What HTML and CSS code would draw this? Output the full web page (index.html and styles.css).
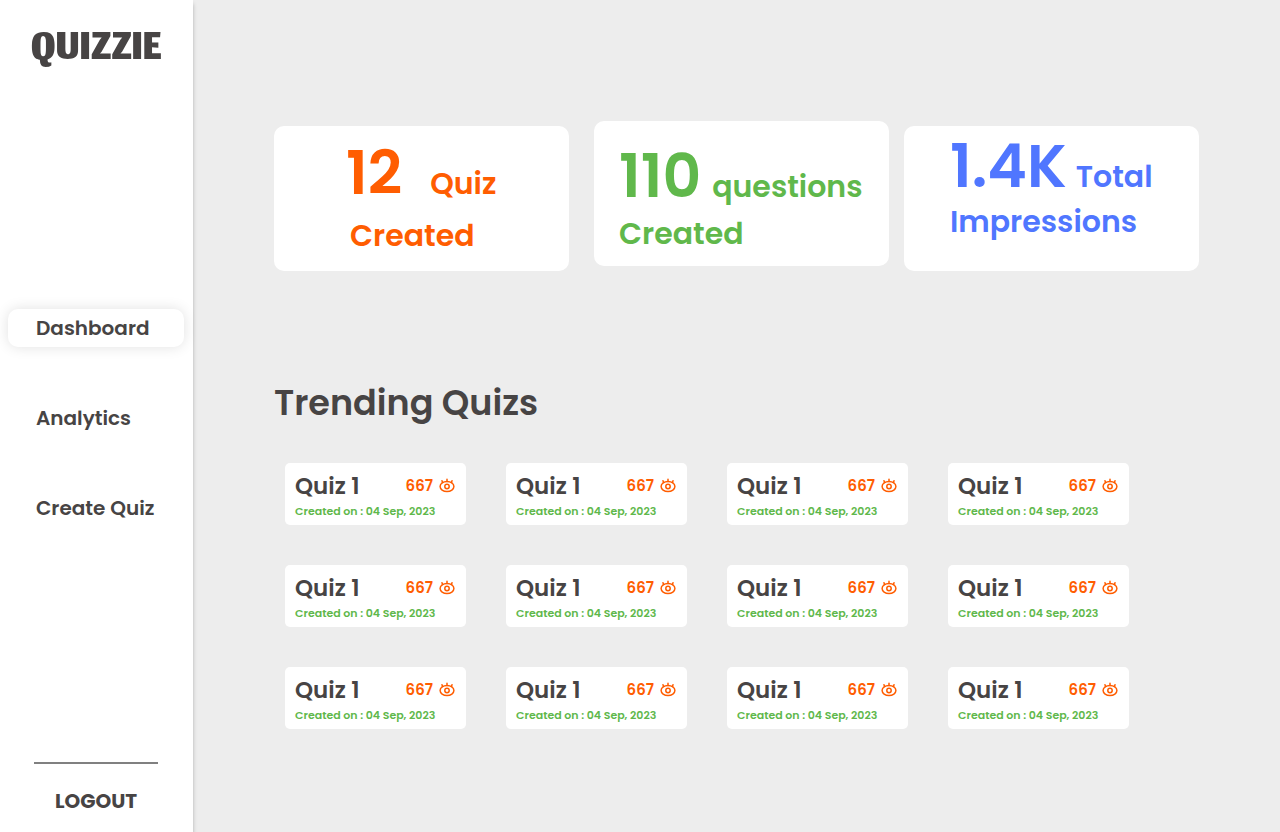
FILE: index.html
```html
<!DOCTYPE html>
<html lang="en">
<head>
<meta charset="utf-8">
<meta name="viewport" content="width=device-width, initial-scale=1">
<title>Quizzie</title>
<link rel="stylesheet" href="styles.css">
</head>
<body>
<svg class="sprite" aria-hidden="true">
  <symbol id="eye" viewBox="0 0 16 16">
    <g fill="none" stroke="currentColor" stroke-width="1.5" stroke-linecap="round">
      <ellipse cx="8" cy="8.500" rx="6.900" ry="5"/>
      <circle cx="8" cy="8.500" r="2.200"/>
      <path d="M8 3.400V1.200M3.600 4.500 3 2.700M12.400 4.500l.6-1.800"/>
    </g>
  </symbol>
</svg>
<div class="layout">
  <aside class="sidebar">
    <div class="logo">QUIZZIE</div>
    <nav class="nav">
      <a class="nav-link active" href="#dashboard">Dashboard</a>
      <a class="nav-link" href="#analytics">Analytics</a>
      <a class="nav-link" href="#create">Create Quiz</a>
    </nav>
    <div class="sidebar-foot">
      <button class="logout" type="button">LOGOUT</button>
    </div>
  </aside>
  <main class="main">
    <section class="stats">
      <div class="stat quizzes">
        <div class="stat-top"><span class="value">12</span><span>Quiz</span></div>
        <div class="stat-bottom">Created</div>
      </div>
      <div class="stat questions">
        <div class="stat-top"><span class="value">110</span><span>questions</span></div>
        <div class="stat-bottom">Created</div>
      </div>
      <div class="stat impressions">
        <div class="stat-top"><span class="value">1.4K</span><span>Total</span></div>
        <div class="stat-bottom">Impressions</div>
      </div>
    </section>
    <h1 class="title">Trending Quizs</h1>
    <section class="quizzes-grid" id="grid"></section>
  </main>
</div>
<script src="app.js"></script>
</body>
</html>
```
FILE: app.js
```js
const quizzes = Array.from({ length: 12 }, () => ({ name: "Quiz 1", views: 667, date: "04 Sep, 2023" }));
document.getElementById("grid").innerHTML = quizzes.map(q => `
  <article class="quiz">
    <div class="quiz-head">
      <h2 class="quiz-name">${q.name}</h2>
      <span class="views">${q.views}<svg class="eye" aria-hidden="true"><use href="#eye"/></svg></span>
    </div>
    <p class="date">Created on : ${q.date}</p>
  </article>`).join("");
```
FILE: styles.css
```css
* { box-sizing: border-box; }
body {
  margin: 0;
  background: #ededed;
  color: #474444;
  font-family: Poppins, Inter, "Open Sans", sans-serif;
  font-weight: 600;
}
.sprite { position: absolute; width: 0; height: 0; }
.layout { display: flex; min-height: 100vh; }
.sidebar {
  flex: none;
  width: 193px;
  display: flex;
  flex-direction: column;
  justify-content: space-between;
  background: #fff;
  box-shadow: 0 4px 4px rgba(0, 0, 0, 0.25);
}
.logo {
  height: 74px;
  padding: 29px 0 0 31px;
  font: 400 70px/44px Jomhuria, Roboto, sans-serif;
}
.nav { display: flex; flex-direction: column; gap: 52px; padding: 0 9px 0 8px; }
.nav-link {
  padding: 0 28px;
  border-radius: 10px;
  color: inherit;
  font-size: 20px;
  line-height: 38px;
  text-decoration: none;
  white-space: nowrap;
}
.nav-link.active { box-shadow: 0 0 14px rgba(0, 0, 0, 0.12); }
.sidebar-foot {
  margin: 0 35px 0 34px;
  padding: 18px 0 12px;
  border-top: 2px solid #808080;
}
.logout {
  display: block;
  width: 100%;
  padding: 0;
  border: 0;
  background: none;
  color: inherit;
  font: inherit;
  font-weight: 700;
  font-size: 20px;
  line-height: 38px;
  cursor: pointer;
}
.main { flex: 1; min-width: 0; padding: 121px 81px 40px; }
.stats {
  display: grid;
  grid-template-columns: 1fr 25px 1fr 15px 1fr;
  align-items: start;
}
.stat {
  min-width: 0;
  min-height: 145px;
  margin-top: 5px;
  border-radius: 10px;
  background: #fff;
  font-size: 30px;
  line-height: 44px;
  white-space: nowrap;
}
.stat-top { display: flex; align-items: baseline; gap: 11px; }
.value { font-size: 60px; line-height: 60px; }
.quizzes { padding: 17px 0 0 72px; color: #ff5d01; }
.quizzes .stat-top { gap: 28px; }
.quizzes .stat-bottom { padding: 8px 0 0 4px; }
.questions { grid-column: 3; margin-top: 0; padding: 25px 0 0 25px; color: #60b84b; }
.questions .stat-bottom { padding-top: 3px; }
.impressions { grid-column: 5; padding: 10px 0 0 46px; color: #5076ff; }
.impressions .stat-top { gap: 9px; }
.impressions .stat-bottom { padding-top: 1px; }
.title {
  margin: 108px 0 36px;
  font-size: 35px;
  font-weight: 600;
  line-height: 48px;
}
.quizzes-grid {
  display: grid;
  grid-template-columns: repeat(4, 1fr);
  gap: 40px;
  margin: 0 70px 0 11px;
}
.quiz { min-height: 62px; padding: 8px 11px 6px 10px; border-radius: 5px; background: #fff; }
.quiz-head { display: flex; align-items: center; justify-content: space-between; }
.quiz-name { margin: 0; font-size: 23px; font-weight: 600; line-height: 30px; }
.views {
  display: flex;
  align-items: center;
  gap: 6px;
  color: #ff5d01;
  font-size: 15px;
  line-height: 30px;
}
.eye { width: 16px; height: 16px; }
.date { margin: 2px 0 0; color: #60b84b; font-size: 11px; line-height: 16px; white-space: nowrap; }
```
